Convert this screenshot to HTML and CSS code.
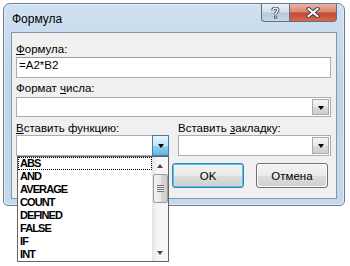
FILE: index.html
```html
<!DOCTYPE html>
<html lang="ru">
<head>
  <meta charset="UTF-8">
  <title>Формула</title>
  <link rel="stylesheet" href="styles.css">
</head>
<body>

<div class="page">
  <div class="window">
    <!-- Title bar -->
    <div class="titlebar">
      <span class="title">Формула</span>
      <div class="caption-btns">
        <div class="cap-btn help">
          <svg width="9" height="12" viewBox="0 0 9 12">
            <path d="M1.8 3.6 C1.8 1.8 3.2 1.2 4.4 1.2 C5.9 1.2 6.9 2.1 6.9 3.3 C6.9 5 4.6 5.1 4.6 7.3" fill="none" stroke="#4a5664" stroke-width="3.2"/>
            <rect x="3" y="8.6" width="3.2" height="3" fill="#4a5664"/>
            <path d="M1.8 3.6 C1.8 1.8 3.2 1.2 4.4 1.2 C5.9 1.2 6.9 2.1 6.9 3.3 C6.9 5 4.6 5.1 4.6 7.3" fill="none" stroke="#fff" stroke-width="1.3"/>
            <rect x="4" y="9.5" width="1.3" height="1.3" fill="#fff"/>
          </svg>
        </div>
        <div class="cap-btn close">
          <svg width="14" height="11" viewBox="0 0 14 11">
            <path d="M2.5 1.8 L11.5 9.2 M11.5 1.8 L2.5 9.2" stroke="#3b3f46" stroke-width="4" stroke-linecap="square"/>
            <path d="M2.5 1.8 L11.5 9.2 M11.5 1.8 L2.5 9.2" stroke="#fff" stroke-width="2" stroke-linecap="square"/>
          </svg>
        </div>
      </div>
    </div>

    <!-- Dialog body -->
    <div class="client">
      <div class="lbl"><u>Ф</u>ормула:</div>
      <div class="textbox">=A2*B2</div>

      <div class="lbl lbl-gap">Формат <u>ч</u>исла:</div>
      <div class="combo short"><span class="drop"></span></div>

      <div class="cols">
        <div class="col fn-col">
          <div class="lbl"><u>В</u>ставить функцию:</div>
          <div class="combo open"><span class="drop"></span></div>

          <!-- Dropped-down function list -->
          <div class="listbox">
            <div class="items">
              <div class="item focused">ABS</div>
              <div class="item">AND</div>
              <div class="item">AVERAGE</div>
              <div class="item">COUNT</div>
              <div class="item">DEFINED</div>
              <div class="item">FALSE</div>
              <div class="item">IF</div>
              <div class="item">INT</div>
            </div>
            <div class="scrollbar">
              <div class="sb-arrow up"></div>
              <div class="sb-thumb"></div>
              <div class="sb-track"></div>
              <div class="sb-arrow down"></div>
            </div>
          </div>
        </div>
        <div class="col">
          <div class="lbl">Вставить <u>з</u>акладку:</div>
          <div class="combo"><span class="drop"></span></div>
        </div>
      </div>

      <div class="actions">
        <button class="btn default">OK</button>
        <button class="btn">Отмена</button>
      </div>
    </div>
  </div>
</div>

</body>
</html>
```

FILE: styles.css
```css
/* Word "Formula" dialog, Windows 7 look */
html, body {
  height: 100%;
}
body {
  margin: 0;
  background-color: #fff;
  font-family: "Liberation Sans", Arial, sans-serif;
  font-size: 11.5px;
  color: #000;
}
.page {
  min-height: 266px;
  padding: 3px 0 0 3px;
  box-sizing: border-box;
}
.window {
  width: 342px;
  height: 203px;
  box-sizing: border-box;
  border: 1px solid #6b7b8d;
  border-radius: 7px 7px 5px 5px;
  padding: 0 7px 6px;
  background: linear-gradient(to bottom, #cfe0f1 0%, #bfd5ea 40%, #c3d8ec 100%);
  box-shadow: inset 0 0 0 1px #e3edf7;
}
.titlebar {
  display: flex;
  align-items: flex-start;
  height: 28px;
}
.title {
  font-size: 12px;
  line-height: 14px;
  padding: 8px 0 0 1px;
}
.caption-btns {
  display: flex;
  margin-left: auto;
}
.cap-btn {
  height: 18px;
  box-sizing: border-box;
  border: 1px solid #5f6f82;
  border-top: none;
  display: flex;
  align-items: center;
  justify-content: center;
}
.help {
  width: 28px;
  border-right: none;
  border-radius: 0 0 0 4px;
  background: linear-gradient(to bottom, #e9f0f7 0%, #d3dfeb 48%, #b7c8da 52%, #c9d7e5 100%);
}
.close {
  width: 48px;
  border-radius: 0 0 4px 0;
  background: linear-gradient(to bottom, #e9b3a5 0%, #d98671 48%, #c6452e 52%, #d8694f 100%);
}

.client {
  height: 167px;
  box-sizing: border-box;
  border: 1px solid #8396aa;
  background-color: #f0f0f0;
  padding: 9px 5px 10px 4px;
}
.lbl {
  line-height: 14px;
  height: 14px;
  margin-bottom: 1px;
  white-space: nowrap;
}
.lbl-gap {
  margin-top: 3px;
  margin-bottom: 2px;
}
.textbox {
  height: 21px;
  box-sizing: border-box;
  border: 1px solid #abadb3;
  border-top-color: #9a9da5;
  background-color: #fff;
  padding: 0 2px;
  line-height: 15px;
}
.combo {
  height: 21px;
  box-sizing: border-box;
  border: 1px solid #abadb3;
  background-color: #fff;
  padding: 1px;
  display: flex;
  justify-content: flex-end;
}
.combo.short {
  height: 20px;
}
.drop {
  width: 17px;
  box-sizing: border-box;
  border: 1px solid #a9a9a9;
  background: linear-gradient(to bottom, #f4f4f4 0%, #e8e8e8 50%, #d9d9d9 51%, #cfcfcf 100%);
  display: flex;
  align-items: center;
  justify-content: center;
}
.drop::after {
  content: "";
  border-left: 3.5px solid transparent;
  border-right: 3.5px solid transparent;
  border-top: 4px solid #000;
  margin-top: 1px;
}
.combo.open {
  padding: 0;
}
.combo.open .drop {
  margin: -1px;
  border-color: #3c7fb1;
  background: linear-gradient(to bottom, #e5f4fc 0%, #c4e5f6 50%, #98d1ef 51%, #68b3db 100%);
}

.cols {
  display: grid;
  grid-template-columns: 153px 1fr;
  column-gap: 9px;
  margin-top: 4px;
}
.cols .lbl {
  margin-bottom: 0;
}
.fn-col {
  position: relative;
}

/* open list, lies over the buttons and past the window */
.listbox {
  position: absolute;
  top: 100%;
  left: 1px;
  width: 152px;
  height: 106px;
  box-sizing: border-box;
  border: 1px solid #646464;
  background-color: #fff;
  display: flex;
  z-index: 2;
}
.items {
  flex: 1;
}
.item {
  height: 13px;
  line-height: 13px;
  padding-left: 2px;
  font-size: 11px;
  font-weight: bold;
  letter-spacing: -0.9px;
  box-sizing: border-box;
}
.item.focused {
  outline: 1px dotted #000;
  outline-offset: -1px;
}
.scrollbar {
  width: 16px;
  display: flex;
  flex-direction: column;
  background: linear-gradient(to right, #e4e4e4 0%, #f4f4f4 30%, #f7f7f7 100%);
}
.sb-arrow {
  height: 17px;
  display: flex;
  align-items: center;
  justify-content: center;
}
.sb-arrow.down {
  height: 16px;
}
.sb-arrow.up::after {
  content: "";
  border-left: 3.5px solid transparent;
  border-right: 3.5px solid transparent;
  border-bottom: 4px solid #4a4a4a;
}
.sb-arrow.down::after {
  content: "";
  border-left: 3.5px solid transparent;
  border-right: 3.5px solid transparent;
  border-top: 4px solid #4a4a4a;
}
.sb-thumb {
  height: 29px;
  flex-shrink: 0;
  box-sizing: border-box;
  margin-left: 1px;
  border: 1px solid #9b9b9b;
  border-radius: 2px;
  background: linear-gradient(to right, #f3f3f3 0%, #e8e8e8 50%, #d8d8d8 51%, #cdcdcd 100%);
  display: flex;
  align-items: center;
  justify-content: center;
}
.sb-thumb::after {
  content: "";
  width: 7px;
  height: 7px;
  background: repeating-linear-gradient(to bottom, #6f6f6f 0, #6f6f6f 1px, #f6f6f6 1px, #f6f6f6 2px);
}
.sb-track {
  flex: 1;
}

.actions {
  display: flex;
  justify-content: flex-end;
  gap: 12px;
  margin-top: 7px;
  padding-right: 3px;
}
.btn {
  width: 72px;
  height: 25px;
  padding: 0;
  font-family: inherit;
  font-size: 11.5px;
  color: #000;
  border: 1px solid #707070;
  border-radius: 3px;
  background: linear-gradient(to bottom, #f2f2f2 0%, #ebebeb 50%, #dddddd 51%, #cfcfcf 100%);
  box-shadow: inset 0 0 0 1px #fbfbfb;
}
.btn.default {
  border-color: #3c7fb1;
  box-shadow: inset 0 0 0 1px #48c8f4;
}
```
